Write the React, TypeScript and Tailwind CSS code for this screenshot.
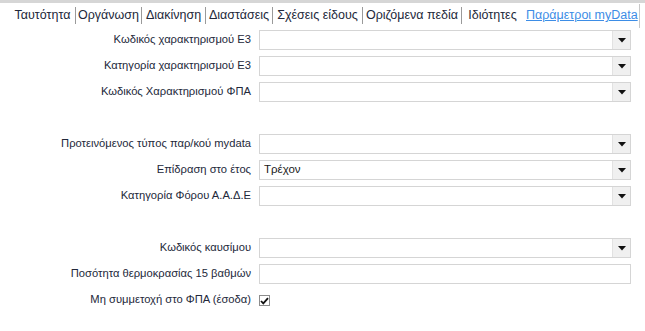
const tabs = [
  { label: 'Ταυτότητα', w: 'w-[65px]' },
  { label: 'Οργάνωση', w: 'w-[65px]' },
  { label: 'Διακίνηση', w: 'w-[63px]' },
  { label: 'Διαστάσεις', w: 'w-[66px]' },
  { label: 'Σχέσεις είδους', w: 'w-[89px]' },
  { label: 'Οριζόμενα πεδία', w: 'w-[98px]' },
  { label: 'Ιδιότητες', w: 'w-[61px]' },
]

type Row =
  | { kind: 'select'; label: string; value?: string }
  | { kind: 'text'; label: string }
  | { kind: 'check'; label: string; checked: boolean }
  | { kind: 'blank' }

const rows: Row[] = [
  { kind: 'select', label: 'Κωδικός χαρακτηρισμού Ε3' },
  { kind: 'select', label: 'Κατηγορία χαρακτηρισμού Ε3' },
  { kind: 'select', label: 'Κωδικός Χαρακτηρισμού ΦΠΑ' },
  { kind: 'blank' },
  { kind: 'select', label: 'Προτεινόμενος τύπος παρ/κού mydata' },
  { kind: 'select', label: 'Επίδραση στο έτος', value: 'Τρέχον' },
  { kind: 'select', label: 'Κατηγορία Φόρου Α.Α.Δ.Ε' },
  { kind: 'blank' },
  { kind: 'select', label: 'Κωδικός καυσίμου' },
  { kind: 'text', label: 'Ποσότητα θερμοκρασίας 15 βαθμών' },
  { kind: 'check', label: 'Μη συμμετοχή στο ΦΠΑ (έσοδα)', checked: true },
]

const Arrow = () => (
  <svg width="8" height="5" viewBox="0 0 8 5">
    <path d="M0 0h8L4 4.5z" fill="#111" />
  </svg>
)

function Field({ row }: { row: Row }) {
  if (row.kind === 'blank') return <div className="h-[20px]" />
  return (
    <div className="flex h-[20px] items-center">
      <div className="w-[252px] shrink-0 whitespace-nowrap pr-[1px] text-right text-[11.2px] text-[#23283a]">{row.label}</div>
      <div className="ml-[7px] flex w-[372px] items-center">
        {row.kind === 'check' ? (
          <div className="mt-[1px] flex h-[11px] w-[11px] items-center justify-center border border-[#8c8c8c] bg-white">
            {row.checked && (
              <svg width="9" height="8" viewBox="0 0 9 8">
                <path d="M1 4l2.3 2.4L8 1.2" stroke="#111" strokeWidth="1.8" fill="none" />
              </svg>
            )}
          </div>
        ) : (
          <div className="flex h-[20px] w-full items-stretch border border-[#d5d5d5] bg-white">
            <div className="flex flex-1 items-center pl-[4px] text-[#1a1a1a]">{row.kind === 'select' ? row.value : ''}</div>
            {row.kind === 'select' && (
              <div className="flex w-[18px] items-center justify-center border-l border-[#e2e2e2] bg-[#f0f0f0]">
                <Arrow />
              </div>
            )}
          </div>
        )}
      </div>
    </div>
  )
}

export default function App() {
  return (
    <div className="h-[331px] w-[645px] bg-white text-[11.5px] leading-none" style={{ fontFamily: '"Liberation Sans", Arial, sans-serif' }}>
      <div className="h-[3px] bg-[#d6d6d6]" />
      <div className="flex h-[24px] items-center pl-[10px] pt-[1px] text-[12.5px]">
        {tabs.map((t, i) => (
          <div key={t.label} className="flex items-center">
            <span className={`${t.w} whitespace-nowrap text-center text-[#23283a]`}>{t.label}</span>
            {i < tabs.length - 1 && <span className="h-[17px] w-px bg-[#9a9a9a]" />}
          </div>
        ))}
        <span className="ml-[3px] w-[110px] whitespace-nowrap text-center text-[#3d8de6] underline">Παράμετροι myData</span>
        <span className="ml-[3px] h-[24px] w-px self-start bg-[#c8c8c8]" />
      </div>
      <div className="mt-[3px] flex flex-col gap-[6px]">
        {rows.map((r, i) => (
          <Field key={i} row={r} />
        ))}
      </div>
    </div>
  )
}
